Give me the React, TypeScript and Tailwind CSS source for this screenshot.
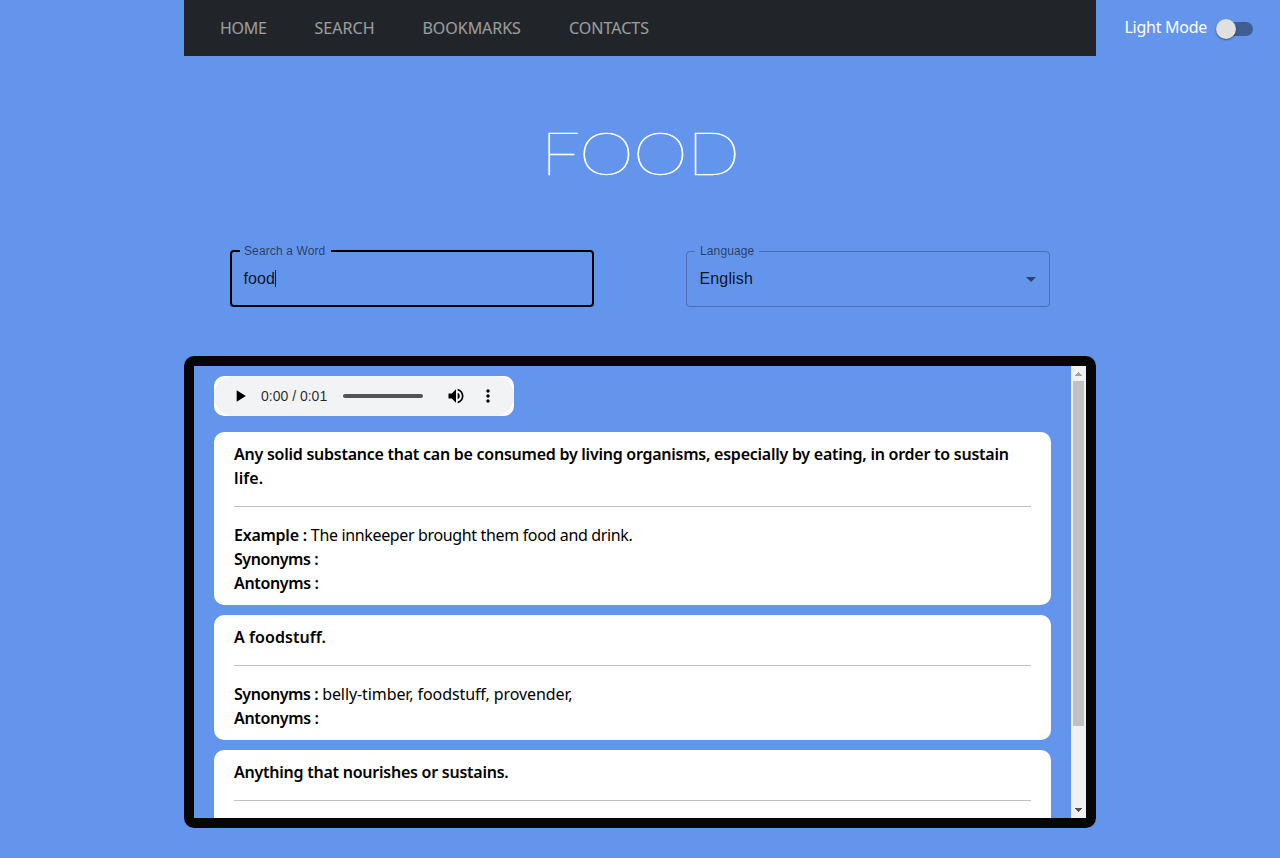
import type { ReactNode } from "react";

type Meaning = {
  definition: ReactNode;
  example?: string;
  synonyms?: string;
  antonyms?: string;
};

const meanings: Meaning[] = [
  {
    definition: (
      <>
        <span className="block whitespace-nowrap tracking-[-0.248px]">
          Any solid substance that can be consumed by living organisms, especially by eating, in order to sustain
        </span>
        <span className="block tracking-[0.1px]">life.</span>
      </>
    ),
    example: "The innkeeper brought them food and drink.",
    synonyms: "",
    antonyms: "",
  },
  {
    definition: <span className="tracking-[0.06px]">A foodstuff.</span>,
    synonyms: "belly-timber, foodstuff, provender,",
    antonyms: "",
  },
  {
    definition: <span className="tracking-[-0.24px]">Anything that nourishes or sustains.</span>,
  },
];

function NavBar() {
  return (
    <nav className="flex h-14 w-[912px] items-center bg-[#212529] pl-9 text-white/55">
      <a className="w-[94.5px] tracking-[-0.25px]">HOME</a>
      <a className="w-[108px] tracking-[0.05px]">SEARCH</a>
      <a className="w-[146.5px] tracking-[-0.04px]">BOOKMARKS</a>
      <a>CONTACTS</a>
    </nav>
  );
}

function ModeSwitch() {
  return (
    <div className="flex h-14 flex-1 items-center pl-7 text-white">
      <span className="w-[92px] pb-0.5 pl-[0.5px] whitespace-nowrap tracking-[-0.27px]">Light Mode</span>
      <div className="mt-0.5 flex h-3.5 w-[37px] items-center rounded-full bg-gradient-to-r from-transparent from-[12%] to-[#3f5e94] to-[12%]">
        <span className="size-5 rounded-full bg-[#e0e0e0] shadow-[0_1px_2px_rgba(0,0,0,0.45)]" />
      </div>
    </div>
  );
}

function AudioPlayer() {
  return (
    <div className="h-10 w-[300px] rounded-[10px] bg-white">
      <div className="flex h-10 items-center rounded-[20px] bg-[#f1f3f4] pl-4">
        <svg className="size-5" viewBox="0 0 24 24">
          <path d="M8 5v14l11-7z" />
        </svg>
        <span className="ml-[11px] w-[82px] whitespace-nowrap font-['Liberation_Sans',sans-serif] text-sm text-black/85">
          0:00 / 0:01
        </span>
        <div className="h-1 w-20 rounded-full bg-[#545455]" />
        <svg className="ml-[23px] size-5" viewBox="0 0 24 24">
          <path d="M3 9v6h4l5 5V4L7 9H3zm13.5 3c0-1.77-1.02-3.29-2.5-4.03v8.05c1.48-.73 2.5-2.25 2.5-4.02zM14 3.23v2.06c2.89.86 5 3.54 5 6.71s-2.11 5.85-5 6.71v2.06c4.01-.91 7-4.49 7-8.77s-2.99-7.86-7-8.77z" />
        </svg>
        <svg className="ml-3 size-5" viewBox="0 0 24 24">
          <path d="M12 8c1.1 0 2-.9 2-2s-.9-2-2-2-2 .9-2 2 .9 2 2 2zm0 2c-1.1 0-2 .9-2 2s.9 2 2 2 2-.9 2-2-.9-2-2-2zm0 6c-1.1 0-2 .9-2 2s.9 2 2 2 2-.9 2-2-.9-2-2-2z" />
        </svg>
      </div>
    </div>
  );
}

function MeaningCard({ definition, example, synonyms, antonyms }: Meaning) {
  return (
    <article className="shrink-0 rounded-[10px] bg-white px-5 py-2.5 leading-6 text-black">
      <h2 className="font-semibold">{definition}</h2>
      <hr className="my-4 border-t border-[#bfbfbf]" />
      {example !== undefined && (
        <p className="flex gap-1">
          <b className="font-semibold tracking-[-0.25px]">Example :</b>
          <span className="tracking-[-0.35px]">{example}</span>
        </p>
      )}
      {synonyms !== undefined && (
        <p className="flex gap-1">
          <b className="font-semibold tracking-[-0.43px]">Synonyms :</b>
          <span className="tracking-[-0.09px]">{synonyms}</span>
        </p>
      )}
      {antonyms !== undefined && (
        <p className="flex gap-1">
          <b className="font-semibold tracking-[-0.35px]">Antonyms :</b>
          <span>{antonyms}</span>
        </p>
      )}
    </article>
  );
}

function ScrollBar() {
  return (
    <div className="flex w-[15px] flex-col items-center bg-[#f1f1f1]">
      <svg className="h-[15px] w-[15px] shrink-0" viewBox="0 0 15 15" shapeRendering="crispEdges">
        <path d="M7 6h1v1h1v1h1v1h1v1H4V9h1V8h1V7h1z" fill="#a3a3a3" />
      </svg>
      <div className="h-[345px] w-[11px] shrink-0 bg-[#c1c1c1]" />
      <div className="flex-1" />
      <svg className="h-[15px] w-[15px] shrink-0" viewBox="0 0 15 15" shapeRendering="crispEdges">
        <path d="M4 5h7v1h-1v1H9v1H8v1H7V8H6V7H5V6H4z" fill="#505050" />
      </svg>
    </div>
  );
}

export default function App() {
  return (
    <div className="h-[858px] overflow-hidden bg-[#6495ed] font-['Noto_Sans',sans-serif] text-base">
      <header className="flex pl-[184px]">
        <NavBar />
        <ModeSwitch />
      </header>

      <main className="mx-auto w-[912px]">
        <h1 className="flex h-[195px] items-center justify-center pb-0.5 pl-px font-['Lato',sans-serif] text-[60.5px] font-thin text-white">
          <span className="scale-x-[1.155] tracking-[-0.6px] [-webkit-text-stroke:0.6px_white]">FOOD</span>
        </h1>

        <div className="flex justify-between px-[46px] font-['Liberation_Sans',sans-serif]">
          <fieldset className="-mt-[7px] h-[63px] w-[364px] rounded border-2 border-black pl-2">
            <legend className="h-3.5 w-[91px] pl-1 text-xs leading-[14px] whitespace-nowrap tracking-[0.12px] text-black/60">
              Search a Word
            </legend>
            <div className="flex h-[41px] items-center pl-[3.5px] tracking-[0.1px] text-black/87">
              food
              <span className="h-[17px] w-px bg-black" />
            </div>
          </fieldset>
          <fieldset className="-mt-[7px] h-[63px] w-[364px] rounded border border-black/25 pl-2">
            <legend className="h-3.5 w-16 pl-[5px] text-xs leading-[14px] tracking-[0.12px] text-black/60">Language</legend>
            <div className="flex h-[41px] items-center justify-between pr-1.5 pl-[4.5px] tracking-[0.15px] text-black/87">
              English
              <svg className="size-6 fill-black/55" viewBox="0 0 24 24">
                <path d="M7 10l5 5 5-5z" />
              </svg>
            </div>
          </fieldset>
        </div>

        <section className="mt-[49px] flex h-[472px] overflow-hidden rounded-[10px] border-10 border-[#060606]">
          <div className="flex flex-1 flex-col gap-2.5 overflow-hidden px-5 pt-2.5">
            <div className="mb-1.5">
              <AudioPlayer />
            </div>
            {meanings.map((meaning, index) => (
              <MeaningCard key={index} {...meaning} />
            ))}
            <div className="h-40 shrink-0" />
          </div>
          <ScrollBar />
        </section>
      </main>
    </div>
  );
}
